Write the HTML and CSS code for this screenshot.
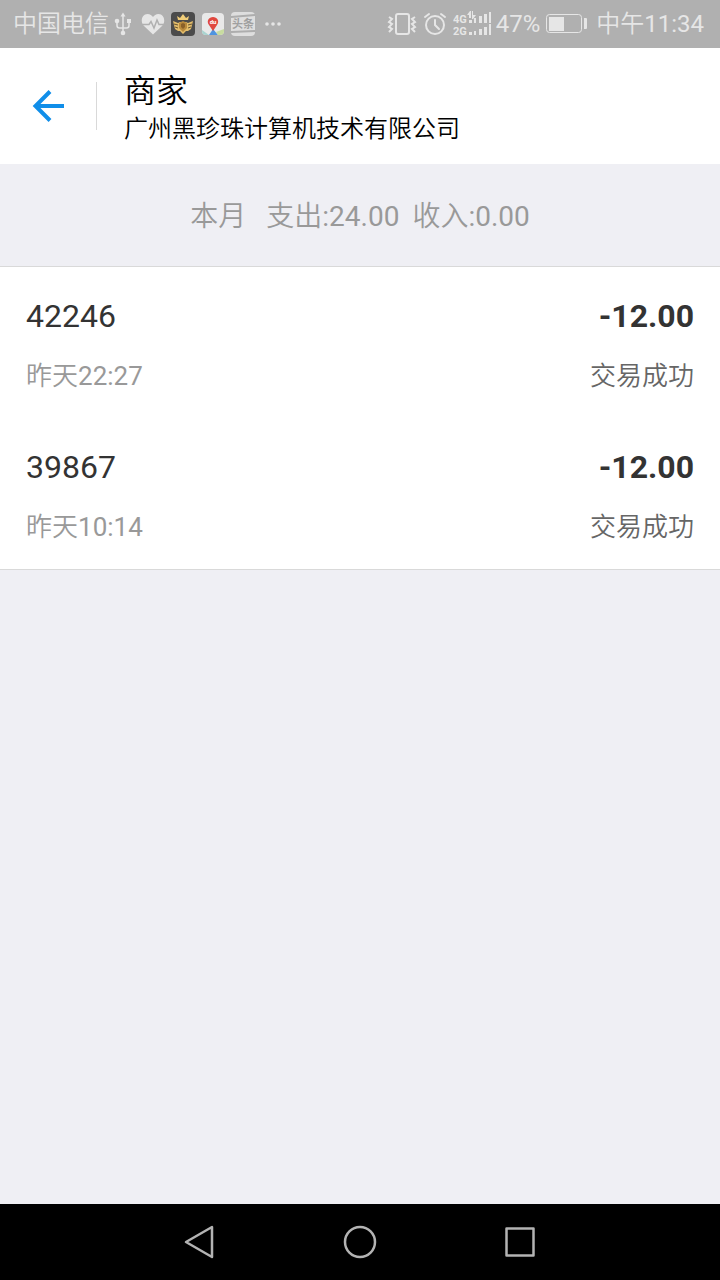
FILE: index.html
```html
<!DOCTYPE html>
<html lang="zh-CN">
<head>
    <meta charset="UTF-8">
    <meta name="viewport" content="width=device-width, initial-scale=1.0">
    <title>商家</title>
    <link rel="stylesheet" href="styles.css">
</head>
<body>
    <div class="status-bar">
        <div class="status-left">
            <span class="carrier light">中国电信</span>
            <!-- usb -->
            <svg width="24" height="24" viewBox="0 0 24 24" fill="none" stroke="#e6e6e6" stroke-width="1.5">
                <path d="M12 3v18M6 9v4.500q0 2.500 2.500 2.500h7q2.500 0 2.500-2.500V9"/>
                <path d="M12 0.500l2.500 4h-5z" fill="#e6e6e6" stroke="none"/>
                <circle cx="6" cy="9" r="2.300" fill="#e6e6e6" stroke="none"/>
                <path d="M16 7h4v4h-4z" fill="#e6e6e6" stroke="none"/>
                <circle cx="12" cy="21" r="2.300" fill="#e6e6e6" stroke="none"/>
            </svg>
            <!-- heart rate -->
            <svg width="24" height="24" viewBox="0 0 24 24">
                <path d="M12 22.500L3 14C-1 10 .5 2 6.500 2 9 2 11 3.500 12 5c1-1.500 3-3 5.500-3C23.500 2 25 10 21 14z" fill="#e6e6e6"/>
                <path d="M0 12.500h8l2-3 3 6.500 3-8 2 4.500h6" fill="none" stroke="#b0b0b0" stroke-width="1.500"/>
            </svg>
            <!-- game -->
            <svg width="24" height="24" viewBox="0 0 24 24">
                <rect width="24" height="24" rx="4" fill="#4b4b4b"/>
                <path d="M2 9l5 2 2-1h6l2 1 5-2-1 4-1 4-3 2h-2l-3 3-3-3H7l-3-2-1-4z" fill="#e3bd6b"/>
                <path d="M7 8L6 4l3 2 3-4 3 4 3-2-1 4z" fill="#f0cd78"/>
                <path d="M8 11l4-2 4 2v5l-4 4-4-4z" fill="#b98a3c"/>
                <path d="M10 12l2-1 2 1v3l-2 2-2-2z" fill="#8a6028"/>
                <path d="M3 12l4 1M4 15l3 1M21 12l-4 1M20 15l-3 1" stroke="#6a5530"/>
            </svg>
            <!-- map -->
            <svg width="24" height="24" viewBox="0 0 24 24">
                <rect x="1" y="1" width="22" height="22" rx="4" fill="#e9e9e9"/>
                <path d="M1 18l7 5H5q-4 0-4-4z" fill="#a9d4d0"/>
                <path d="M8 23l4-6 5 6z" fill="#4f94e0"/>
                <path d="M17 23l-2-3 8-3v2q0 4-4 4z" fill="#c8dca0"/>
                <path d="M12 19l-4-6C5 9 8 5 12 5s7 4 4 8z" fill="#e0483f"/>
                <text x="12" y="12" class="pin-text">du</text>
            </svg>
            <!-- news -->
            <svg width="24" height="24" viewBox="0 0 24 24">
                <rect width="24" height="24" rx="4" fill="#dedede"/>
                <path d="M0 4l24-2v2L0 6zM0 19l24-1v2L0 21z" fill="#adadad"/>
                <text x="12" y="16" class="news-text">头条</text>
            </svg>
            <svg width="24" height="24" viewBox="0 0 24 24" fill="#e6e6e6">
                <circle cx="6" cy="12" r="1.800"/><circle cx="12" cy="12" r="1.800"/><circle cx="18" cy="12" r="1.800"/>
            </svg>
        </div>
        <div class="status-right">
            <!-- vibrate -->
            <svg width="30" height="24" viewBox="0 0 30 24" fill="none" stroke="#e6e6e6" stroke-width="2">
                <rect x="9" y="2" width="13" height="20" rx="2"/>
                <path d="M2 5l3 2-3 3 3 2-3 3 3 2-3 3M28 5l-3 2 3 3-3 2 3 3-3 2 3 3"/>
            </svg>
            <!-- alarm -->
            <svg width="24" height="24" viewBox="0 0 24 24" fill="none" stroke="#e6e6e6" stroke-width="2" stroke-linecap="round">
                <circle cx="12" cy="13" r="9"/>
                <path d="M12 8v5l4 4M2 5l4-3M22 5l-4-3"/>
            </svg>
            <!-- signal -->
            <svg class="signal" width="40" height="28" viewBox="0 0 40 28" fill="#e6e6e6">
                <text x="0" y="13" class="signal-text">4G</text>
                <text x="0" y="25" class="signal-text">2G</text>
                <path d="M16 10h3v3h-3zM21 8h2v5h-2zM26 6h3v7h-3zM31 4h3v9h-3zM36 2h2v11h-2z"/>
                <path d="M14 5l3-4h1v7h-2V5zM19 1h1v4h3l-3 4h-1z"/>
                <path d="M16 22h3v3h-3zM21 21h2v4h-2zM26 19h3v6h-3zM31 17h3v8h-3zM36 14h2v11h-2z"/>
            </svg>
            <span class="battery-level">47%</span>
            <!-- battery -->
            <svg class="battery" width="42" height="20" viewBox="0 0 42 20">
                <rect x="0.500" y="0.500" width="35" height="18" rx="3" fill="none" stroke="#e6e6e6"/>
                <path d="M3 3h15v14H3zM38 4h2q1 0 1 1v9q0 1-1 1h-2z" fill="#e6e6e6"/>
            </svg>
            <span><span class="light">中午</span>11:34</span>
        </div>
    </div>

    <header class="header">
        <button class="back" aria-label="返回">
            <svg width="34" height="34" viewBox="0 0 34 34" fill="none" stroke="#108ee9" stroke-width="4">
                <path d="M32 17H3M18 2.500L3.500 17 18 31.500"/>
            </svg>
        </button>
        <div class="header-text">
            <h1 class="light">商家</h1>
            <p class="light">广州黑珍珠计算机技术有限公司</p>
        </div>
    </header>

    <main>
        <div class="summary">
            <span class="month light">本月</span>
            <span><span class="light">支出</span>:24.00</span>
            <span class="income"><span class="light">收入</span>:0.00</span>
        </div>
        <ul class="bill-list">
            <li class="bill">
                <div class="line"><span class="name">42246</span><span class="amount">-12.00</span></div>
                <div class="line"><span class="time"><span class="light">昨天</span>22:27</span><span class="state light">交易成功</span></div>
            </li>
            <li class="bill">
                <div class="line"><span class="name">39867</span><span class="amount">-12.00</span></div>
                <div class="line"><span class="time"><span class="light">昨天</span>10:14</span><span class="state light">交易成功</span></div>
            </li>
        </ul>
    </main>

    <nav class="nav-bar">
        <button aria-label="后退">
            <svg width="36" height="36" viewBox="0 0 36 36" fill="none" stroke="#b3b3b3" stroke-width="2.500" stroke-linejoin="round">
                <path d="M4 18L30 3v30z"/>
            </svg>
        </button>
        <button aria-label="主页">
            <svg width="36" height="36" viewBox="0 0 36 36" fill="none" stroke="#b3b3b3" stroke-width="2.500">
                <circle cx="18" cy="18" r="15"/>
            </svg>
        </button>
        <button aria-label="最近任务">
            <svg width="36" height="36" viewBox="0 0 36 36" fill="none" stroke="#b3b3b3" stroke-width="2.500" stroke-linejoin="round">
                <rect x="4.500" y="4.500" width="27" height="27"/>
            </svg>
        </button>
    </nav>
</body>
</html>
```
FILE: styles.css
```css
* {
    box-sizing: border-box;
}
body {
    margin: 0;
    min-height: 100vh;
    display: flex;
    flex-direction: column;
    background-color: #efeff4;
    font-family: Roboto, "Noto Sans CJK SC", sans-serif;
}
button {
    padding: 0;
    border: none;
    background: none;
    cursor: pointer;
}
svg {
    display: block;
}
.light {
    font-weight: 350;
}
.status-bar {
    display: flex;
    justify-content: space-between;
    height: 48px;
    padding: 0 16px 0 13px;
    background-color: #b0b0b0;
    color: #e6e6e6;
    font-size: 24px;
    line-height: 50px;
    white-space: nowrap;
}
.status-left, .status-right {
    display: flex;
    align-items: center;
    gap: 6px;
    height: 48px;
}
.carrier {
    margin-right: -4px;
}
.battery {
    margin-right: 2px;
}
.battery-level {
    margin-left: -3px;
}
.pin-text {
    fill: #fff;
    font-size: 6px;
    font-weight: bold;
    text-anchor: middle;
}
.news-text {
    fill: #a0a0a0;
    font-size: 11px;
    font-weight: bold;
    text-anchor: middle;
}
.signal-text {
    font-size: 11px;
    font-weight: bold;
}
.header {
    display: flex;
    align-items: center;
    height: 116px;
    background-color: #fff;
    color: #000;
}
.back {
    display: flex;
    align-items: center;
    width: 97px;
    height: 48px;
    padding-left: 32px;
    border-right: 1px solid #d9d9d9;
}
.header-text {
    padding: 2px 0 0 27px;
}
.header h1 {
    margin: 0;
    font-size: 32px;
    line-height: 44px;
}
.header p {
    margin: 0;
    font-size: 24px;
    line-height: 32px;
}
main {
    flex: 1;
}
.summary {
    display: flex;
    justify-content: center;
    height: 102px;
    color: #999;
    font-size: 28px;
    line-height: 106px;
}
.month {
    margin-right: 20px;
}
.income {
    margin-left: 13px;
}
.bill-list {
    margin: 0;
    padding: 0;
    list-style: none;
    background-color: #fff;
    border-top: 1px solid #d9d9d9;
    border-bottom: 1px solid #d9d9d9;
}
.bill {
    padding: 29px 26px 22px;
}
.line {
    display: flex;
    justify-content: space-between;
    line-height: 40px;
}
.line + .line {
    margin-top: 20px;
}
.name {
    color: #333;
    font-size: 32px;
}
.amount {
    color: #333;
    font-size: 32px;
    font-weight: bold;
}
.time {
    color: #999;
    font-size: 26px;
}
.state {
    color: #666;
    font-size: 26px;
}
.nav-bar {
    display: flex;
    justify-content: center;
    align-items: center;
    gap: 124px;
    height: 76px;
    background-color: #000;
}
```
